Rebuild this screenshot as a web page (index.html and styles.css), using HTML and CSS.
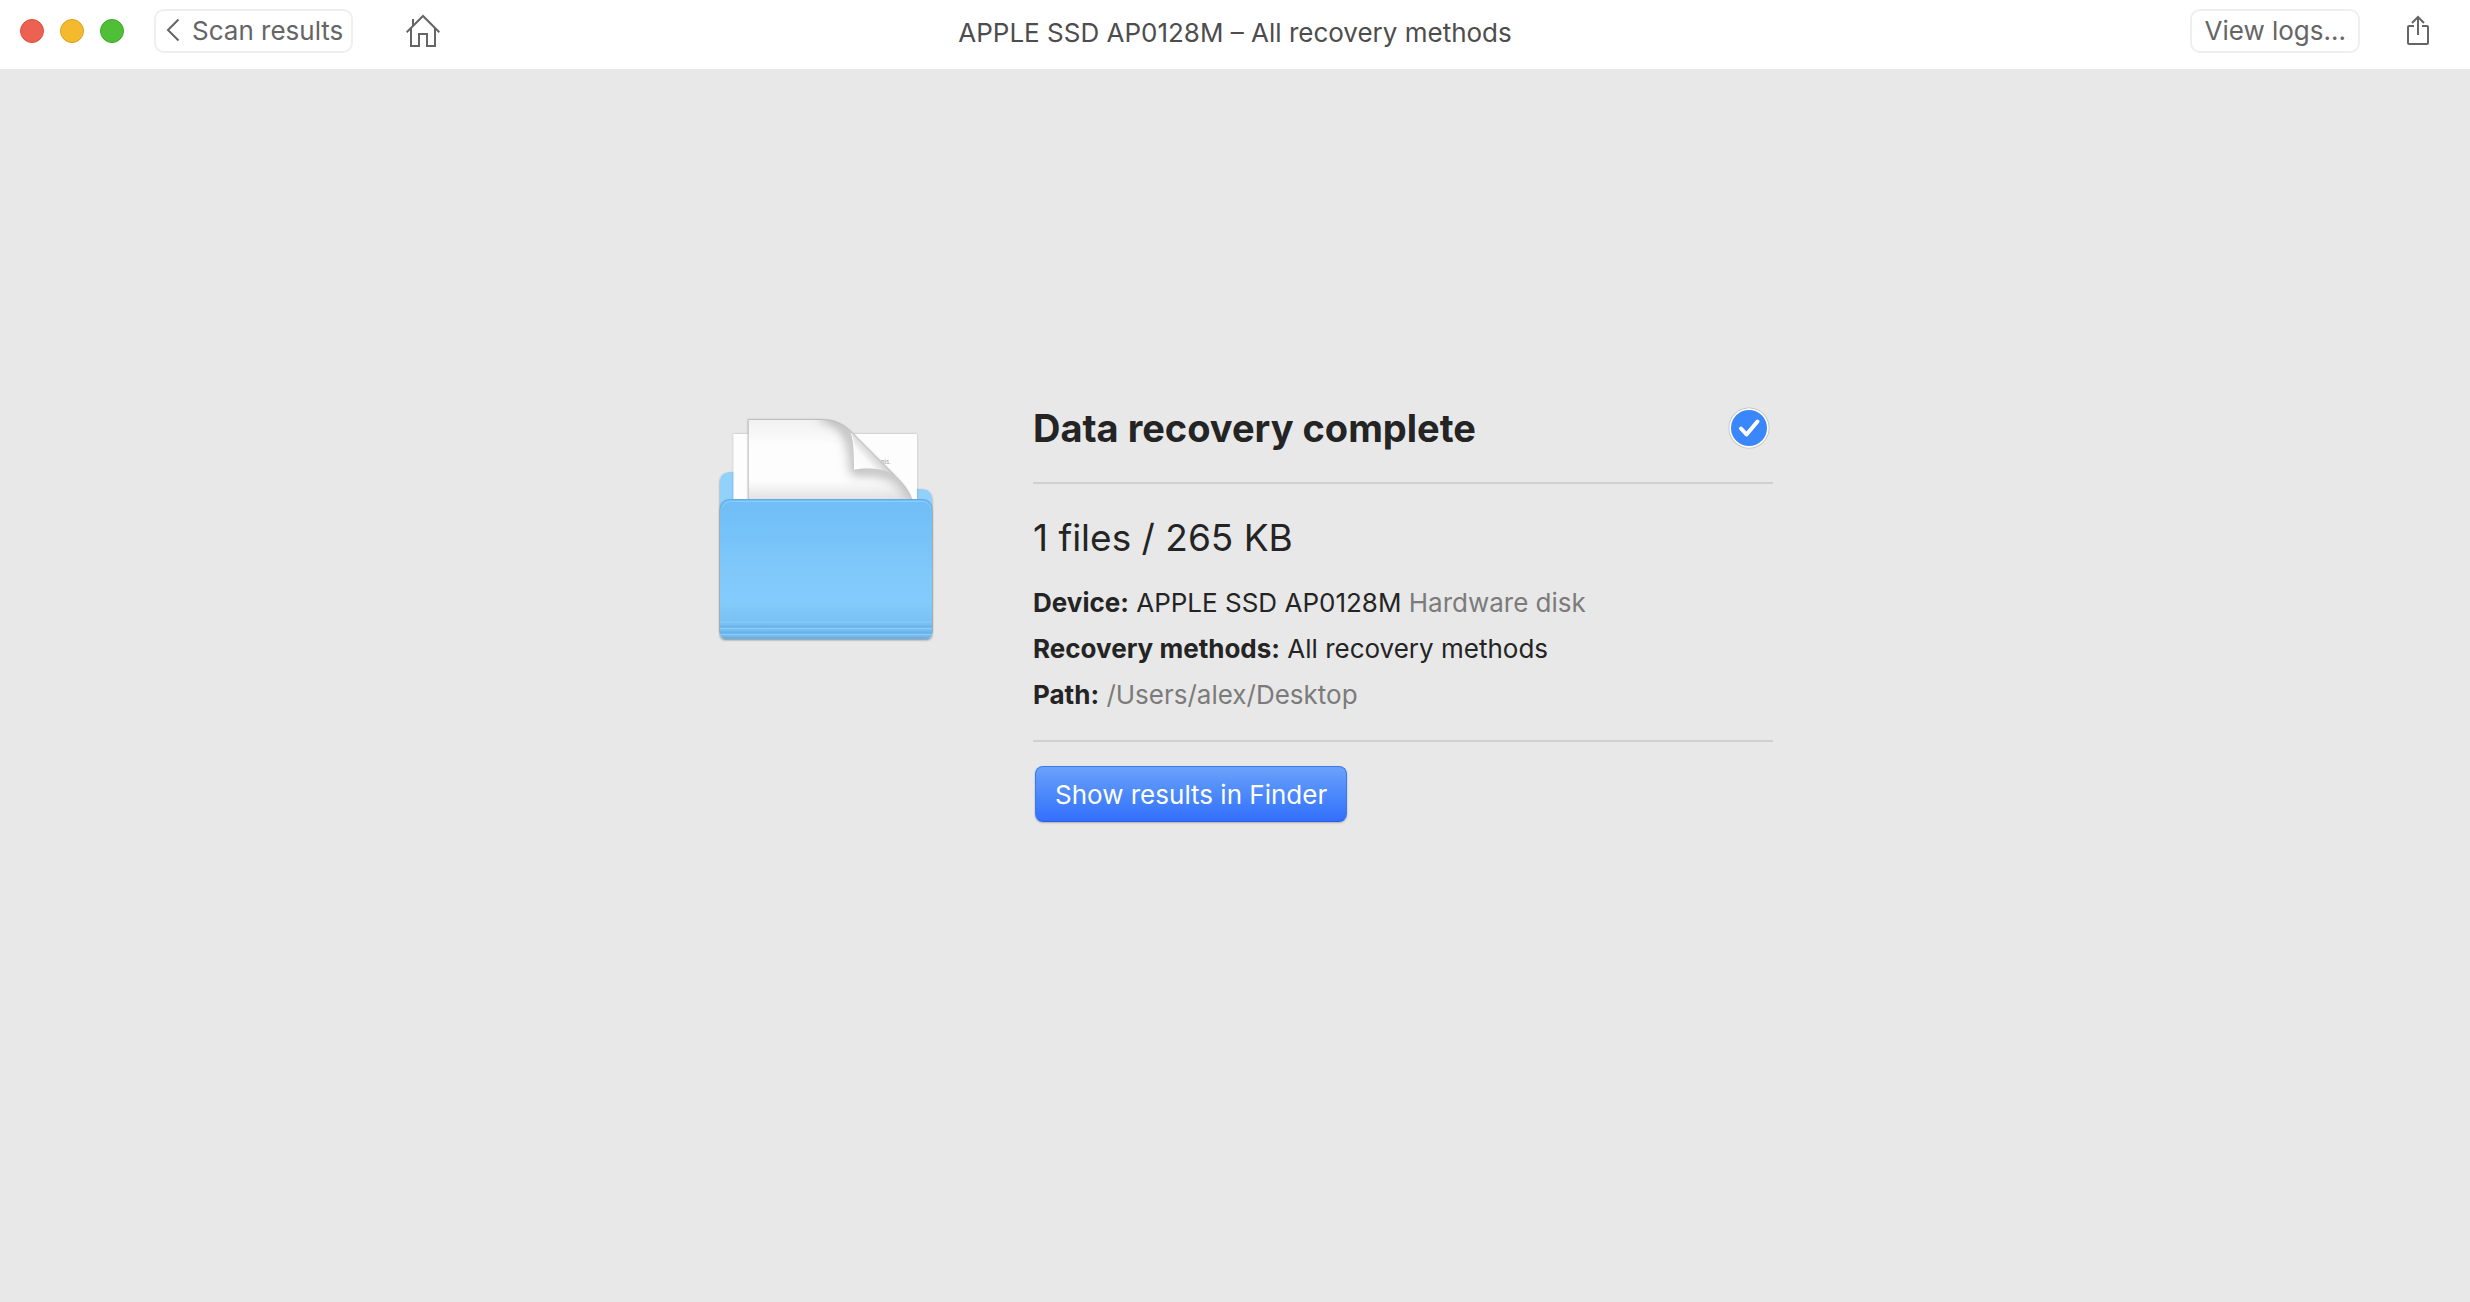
FILE: index.html
```html
<!DOCTYPE html>
<html lang="en">
<head>
<meta charset="utf-8">
<meta name="viewport" content="width=device-width, initial-scale=1">
<title>APPLE SSD AP0128M – All recovery methods</title>
<link rel="stylesheet" href="styles.css">
</head>
<body>
<header class="titlebar">
  <div class="titlebar-start">
    <div class="window-controls">
      <button class="dot dot-close" type="button" aria-label="Close"></button>
      <button class="dot dot-minimize" type="button" aria-label="Minimize"></button>
      <button class="dot dot-zoom" type="button" aria-label="Zoom"></button>
    </div>
    <button class="bar-button back" type="button">
      <svg width="14" height="24" viewBox="0 0 14 24" fill="none" stroke="currentColor" stroke-width="2" aria-hidden="true"><path d="M12.500 1.500 2 12l10.500 10.500"/></svg>
      Scan results
    </button>
    <button class="icon-button home" type="button" aria-label="Home">
      <svg width="34" height="34" viewBox="0 0 34 34" fill="none" stroke="currentColor" stroke-width="2" aria-hidden="true"><path d="M.7 18.200 17 2l16.300 16.200M7 12V5M5 14v18h8V20h8v12h8V14"/></svg>
    </button>
  </div>
  <h1 class="window-title">APPLE SSD AP0128M – All recovery methods</h1>
  <div class="titlebar-end">
    <button class="bar-button" type="button">View logs...</button>
    <button class="icon-button" type="button" aria-label="Share">
      <svg width="24" height="32" viewBox="0 0 24 32" fill="none" stroke="currentColor" stroke-width="2" aria-hidden="true"><path d="M8 12H3a1 1 0 0 0-1 1v16a1 1 0 0 0 1 1h18a1 1 0 0 0 1-1V13a1 1 0 0 0-1-1h-5M12 21V3M6 9l6-6 6 6"/></svg>
    </button>
  </div>
</header>
<main class="result">
  <svg class="folder" viewBox="-3 0 256 256" aria-hidden="true">
    <defs>
      <linearGradient id="front" x1="0" y1="0" x2="0" y2="1">
        <stop offset="0" stop-color="#71bdf7"/><stop offset=".2" stop-color="#74c1f8"/><stop offset=".5" stop-color="#7fc8fa"/><stop offset=".74" stop-color="#83cbfb"/><stop offset=".87" stop-color="#7ac2f4"/><stop offset="1" stop-color="#72b9ec"/>
      </linearGradient>
      <linearGradient id="page" x1="0" y1="0" x2="0" y2="1">
        <stop offset="0" stop-color="#f1f1f1"/><stop offset=".3" stop-color="#fdfdfd"/><stop offset=".75" stop-color="#fdfdfd"/><stop offset="1" stop-color="#dedede"/>
      </linearGradient>
      <linearGradient id="curl" gradientUnits="userSpaceOnUse" x1="154" y1="70" x2="173" y2="53">
        <stop offset="0" stop-color="#fff"/><stop offset=".6" stop-color="#fafafa"/><stop offset="1" stop-color="#d2d2d2"/>
      </linearGradient>
      <clipPath id="pageClip"><path d="M48 19.500h72c14 0 23 4 32 13l42 42c10 10 16 18 18 27H48z"/></clipPath>
      <filter id="shade" x="-30%" y="-30%" width="160%" height="160%"><feGaussianBlur stdDeviation="6"/></filter>
      <filter id="soft" x="-10%" y="-10%" width="120%" height="120%"><feDropShadow dx="0" dy="1" stdDeviation="1.300" flood-opacity=".42"/></filter>
      <filter id="paper" x="-10%" y="-10%" width="120%" height="120%"><feDropShadow dx="0" dy="0" stdDeviation="1" flood-opacity=".22"/></filter>
    </defs>
    <g filter="url(#soft)">
      <path fill="#91d1fb" d="M20 232V82q0-10 11-10h12q5 0 9 8l4 9h165q11 0 11 11v132z"/>
    </g>
    <path filter="url(#paper)" fill="#fdfdfd" d="M33.500 34H217v68H33.500z"/>
    <text class="folder-note" x="181" y="64">nis.</text>
    <path filter="url(#paper)" fill="url(#page)" d="M48 19.500h72c14 0 23 4 32 13l42 42c10 10 16 18 18 27H48z"/>
    <g clip-path="url(#pageClip)">
      <path filter="url(#shade)" fill="none" stroke="#8c8c8c" stroke-width="9" stroke-opacity=".75" d="M122 16c20 2 32 14 34 54 28-2 46 5 60 28"/>
    </g>
    <path fill="url(#curl)" stroke="#c2c2c2" stroke-width=".6" d="M151 32c3 10 3 24 3 38 12-2 27-2 40 5z"/>
    <path fill="none" stroke="#fff" stroke-width="1" d="M151.500 33c3 10 3 24 3 36.500"/>
    <path fill="none" stroke="#b5b5b5" stroke-width=".8" d="M48.300 101V19.500H120c14 0 23 4 32 13l42 42c10 10 16 18 18 26"/>
    <g filter="url(#soft)">
      <path fill="url(#front)" d="M20 109q1-9 9-9h195q7 0 8 9v124q0 6-6 6H26q-6 0-6-6z"/>
    </g>
    <path fill="none" stroke="#62abe2" stroke-width="1" d="M20.500 108q1-8 9-8.500h194q7 .5 8 8.500"/>
    <path fill="none" stroke="#8ccdf9" stroke-width="1" d="M22 108q2-6 8-6.500h193q6 .5 8 6.500M20 222h212M20 228.500h212M20 234.500h212"/>
    <path fill="none" stroke="#5ea9e2" stroke-opacity=".5" stroke-width="2" d="M20 226.500h212M20 232.500h212M23 238h206"/>
  </svg>
  <section class="summary">
    <div class="summary-head">
      <h2>Data recovery complete</h2>
      <svg class="check" viewBox="0 0 46 46" role="img" aria-label="Complete">
        <circle cx="23" cy="23" r="20.500" fill="#bdbdbd"/>
        <circle cx="23" cy="23" r="19.700" fill="#fff"/>
        <circle cx="23" cy="23" r="18" fill="#3a86fb"/>
        <path d="m15 23.500 5.500 6 11-13" fill="none" stroke="#fff" stroke-width="4" stroke-linecap="round" stroke-linejoin="round"/>
      </svg>
    </div>
    <div class="details">
      <p class="totals">1 files / 265 KB</p>
      <p class="detail"><strong>Device:</strong> APPLE SSD AP0128M <span class="muted">Hardware disk</span></p>
      <p class="detail"><strong>Recovery methods:</strong> All recovery methods</p>
      <p class="detail"><strong>Path:</strong> <span class="muted">/Users/alex/Desktop</span></p>
    </div>
    <button class="primary" type="button">Show results in Finder</button>
  </section>
</main>
</body>
</html>
```
FILE: styles.css
```css
* { box-sizing: border-box; }

body {
  margin: 0;
  min-height: 100vh;
  background: #e8e8e8;
  color: #242424;
  font-family: Inter, "Liberation Sans", sans-serif;
  font-size: 26px;
}

h1, h2, p { margin: 0; }

button {
  padding: 0;
  border: 0;
  background: none;
  color: inherit;
  font: inherit;
}

svg { display: block; }

.titlebar {
  display: grid;
  grid-template-columns: 1fr auto 1fr;
  height: 69px;
  padding: 9px 20px 0;
  background: #fff;
  color: #656565;
}

.titlebar-start,
.titlebar-end {
  display: flex;
  align-items: flex-start;
}

.titlebar-end {
  justify-content: flex-end;
  gap: 46px;
  padding-right: 20px;
}

.window-controls {
  display: flex;
  gap: 16px;
  padding: 10px 30px 0 0;
}

.dot {
  width: 24px;
  height: 24px;
  border: 1px solid;
  border-radius: 50%;
}

.dot-close { background: #ed6152; border-color: #d9503f; }
.dot-minimize { background: #f4b92d; border-color: #d9a020; }
.dot-zoom { background: #4fbf37; border-color: #3ca829; }

.bar-button {
  display: flex;
  align-items: center;
  gap: 12px;
  height: 44px;
  padding: 0 12px 2px;
  border: 2px solid #efefef;
  border-radius: 10px;
  background: #fff;
}

.back { padding: 0 8px 2px 10px; }

.icon-button {
  display: flex;
  justify-content: center;
  padding-top: 5px;
}

.home { margin-left: 53px; }

.window-title {
  padding-top: 8px;
  color: #4d4d4d;
  font-size: 26px;
  font-weight: 400;
  line-height: 32px;
}

.result {
  display: flex;
  justify-content: center;
  align-items: flex-start;
  gap: 80px;
  padding: 331px 40px 40px;
}

.folder {
  flex: none;
  width: 256px;
  height: 256px;
}

.folder-note {
  fill: #999;
  font-size: 6px;
}

.summary {
  flex: 0 1 740px;
}

.summary-head {
  display: flex;
  justify-content: space-between;
  align-items: center;
  height: 84px;
  padding: 0 1px 26px 0;
  border-bottom: 2px solid #d0d0d0;
}

h2 {
  font-size: 38px;
  line-height: 56px;
}

.check {
  width: 46px;
  height: 46px;
}

.details {
  padding: 28px 0 22px;
  border-bottom: 2px solid #d0d0d0;
}

.totals {
  padding-bottom: 16px;
  font-size: 37px;
  line-height: 52px;
}

.detail {
  line-height: 46px;
}

.muted { color: #7b7b7b; }

.primary {
  height: 56px;
  margin: 24px 0 0 2px;
  padding: 0 19px;
  border: 1px solid #3a78f0;
  border-bottom-color: #2a5ce8;
  border-radius: 8px;
  background: linear-gradient(#6ba2fa, #4684fb 60%, #346ffd);
  box-shadow: 0 1px 2px rgb(0 0 0 / 25%);
  color: #fff;
}
```
